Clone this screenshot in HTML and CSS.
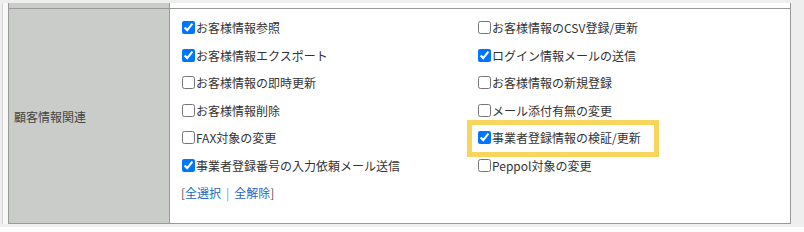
FILE: index.html
```html
<!DOCTYPE html>
<html lang="ja">
<head>
  <meta charset="UTF-8" />
  <title>権限設定</title>
  <link rel="stylesheet" href="styles.css">
</head>
<body>
  <div class="page">
    <div class="sheet">
      <div class="table">
        <!-- previous row, cut off at the top -->
        <div class="row stub">
          <div class="label"></div>
          <div class="cell"></div>
        </div>

        <div class="row">
          <div class="label">顧客情報関連</div>
          <div class="cell">
            <div class="options">
              <label class="opt"><input type="checkbox" checked>お客様情報参照</label>
              <label class="opt"><input type="checkbox">お客様情報のCSV登録/更新</label>
              <label class="opt"><input type="checkbox" checked>お客様情報エクスポート</label>
              <label class="opt"><input type="checkbox" checked>ログイン情報メールの送信</label>
              <label class="opt"><input type="checkbox">お客様情報の即時更新</label>
              <label class="opt"><input type="checkbox">お客様情報の新規登録</label>
              <label class="opt"><input type="checkbox">お客様情報削除</label>
              <label class="opt"><input type="checkbox">メール添付有無の変更</label>
              <label class="opt"><input type="checkbox">FAX対象の変更</label>
              <label class="opt marked"><input type="checkbox" checked>事業者登録情報の検証/更新</label>
              <label class="opt"><input type="checkbox" checked>事業者登録番号の入力依頼メール送信</label>
              <label class="opt"><input type="checkbox">Peppol対象の変更</label>
              <div class="bulk">[<a href="#">全選択</a><span class="sep">|</span><a href="#">全解除</a>]</div>
            </div>
          </div>
        </div>
      </div>
    </div>
  </div>
</body>
</html>
```

FILE: styles.css
```css
body {
  margin: 0;
  background: #fff;
  font-family: "Noto Sans CJK JP", "Noto Sans", sans-serif;
  font-size: 12px;
  color: #333;
}
.page {
  background: #eeeeee;
  padding: 3px 13px 3px 2px;
}
.sheet {
  background: #f8f8f8;
  border-left: 1px solid #d4d4d4;
  padding-left: 5px;
}
.table {
  border-left: 1px solid #999;
  border-right: 1px solid #999;
  border-bottom: 1px solid #999;
}
.row {
  display: grid;
  grid-template-columns: 161px 1fr;
}
.row + .row {
  border-top: 1px solid #999;
}
.row.stub {
  height: 5px;
}
.label {
  background: #c9ccc8;
  border-right: 1px solid #999;
  display: flex;
  align-items: center;
  padding-left: 5px;
  color: #444;
}
.cell {
  background: #fff;
}
.options {
  display: grid;
  grid-template-columns: 296px 1fr;
  grid-auto-rows: 27.5px;
  padding: 5px 0 16.5px 12px;
}
.opt {
  display: flex;
  align-items: center;
  position: relative;
  white-space: nowrap;
}
.opt input {
  width: 13px;
  height: 13px;
  margin: 0 1px 0 0;
}
.opt.marked::after {
  content: "";
  position: absolute;
  left: -11px;
  top: -4px;
  width: 192px;
  height: 37px;
  box-sizing: border-box;
  border: 5px solid #f8d55c;
  pointer-events: none;
}
.bulk {
  grid-column: 1 / 3;
  display: flex;
  align-items: center;
  color: #555;
  margin-left: -1px;
}
.bulk a {
  color: #1f67c4;
  text-decoration: none;
}
.bulk .sep {
  color: #6b9ad6;
  margin: 0 5px;
}
```
